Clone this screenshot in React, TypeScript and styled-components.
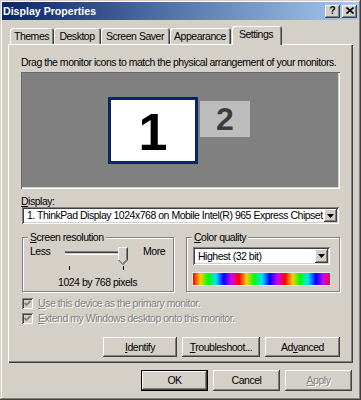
import React from 'react';
import styled, { createGlobalStyle } from 'styled-components';

const GlobalStyle = createGlobalStyle`
  html, body { margin: 0; padding: 0; background: #d4d0c8; }
  * { box-sizing: border-box; }
  u { text-decoration: underline; text-underline-offset: 1px; }
`;

const raised = `
  box-shadow: inset -1px -1px #404040, inset 1px 1px #ffffff, inset -2px -2px #808080, inset 2px 2px #d4d0c8;
`;
const sunken = `
  box-shadow: inset 1px 1px #808080, inset -1px -1px #ffffff, inset 2px 2px #404040, inset -2px -2px #d4d0c8;
`;

const Window = styled.div`
  width: 361px;
  height: 400px;
  background: #d4d0c8;
  padding: 2px;
  display: flex;
  flex-direction: column;
  box-shadow: inset -1px -1px #404040, inset 1px 1px #d4d0c8, inset -2px -2px #808080, inset 2px 2px #ffffff;
  font-family: "Liberation Sans", Arial, sans-serif;
  font-size: 10.5px;
  letter-spacing: -0.48px;
  line-height: 13px;
  color: #000;
`;

const TitleBar = styled.div`
  height: 18px;
  display: flex;
  align-items: center;
  padding: 0 2px 0 1px;
  background: linear-gradient(90deg, #0a246a 0%, #a6caf0 100%);
`;

const Title = styled.span`
  flex: 1;
  color: #fff;
  font-weight: bold;
  font-size: 10.6px;
  letter-spacing: 0;
`;

const TitleButtons = styled.div`
  display: flex;
  gap: 2px;
`;

const TitleButton = styled.div`
  width: 15px;
  height: 13px;
  background: #d4d0c8;
  ${raised}
  display: flex;
  align-items: center;
  justify-content: center;
  font-weight: bold;
  font-size: 10px;
  letter-spacing: 0;
  line-height: 13px;
  padding-bottom: 1px;
`;

const Body = styled.div`
  flex: 1;
  display: flex;
  flex-direction: column;
  padding: 0 6px;
`;

const TabStrip = styled.div`
  margin-top: 6px;
  height: 18px;
  display: flex;
  align-items: flex-end;
  padding-left: 2px;
`;

const Tab = styled.div<{ $w: number; $active?: boolean }>`
  width: ${(p) => p.$w}px;
  height: ${(p) => (p.$active ? 19 : 16)}px;
  margin: ${(p) => (p.$active ? '0 0 -1px 1px' : '0')};
  position: relative;
  z-index: ${(p) => (p.$active ? 1 : 0)};
  background: #d4d0c8;
  border-radius: 3px 3px 0 0;
  box-shadow: inset 1px 1px #ffffff, inset -1px 0 #404040, inset -2px 0 #808080;
  display: flex;
  align-items: center;
  justify-content: center;
  padding: ${(p) => (p.$active ? '0 2px 3px 0' : '0 1px 0 0')};
  white-space: nowrap;
`;

const Panel = styled.div`
  display: flex;
  flex-direction: column;
  padding: 12px 13px 6px 13px;
  background: #d4d0c8;
  box-shadow: inset 1px 1px #ffffff, inset -1px -1px #404040, inset -2px -2px #808080;
`;

const Instruction = styled.div`
  white-space: nowrap;
`;

const Preview = styled.div`
  margin-top: 3px;
  height: 117px;
  position: relative;
  background: #808080;
  box-shadow: inset 1px 1px #6a6a6a, inset -1px -1px #ffffff, inset -2px -2px #d4d0c8;
`;

const Monitor = styled.div<{ $x: number; $y: number; $w: number; $h: number; $primary?: boolean }>`
  position: absolute;
  left: ${(p) => p.$x}px;
  top: ${(p) => p.$y}px;
  width: ${(p) => p.$w}px;
  height: ${(p) => p.$h}px;
  display: flex;
  align-items: center;
  justify-content: center;
  background: ${(p) => (p.$primary ? '#ffffff' : '#bdbdbd')};
  border: ${(p) => (p.$primary ? '3px solid #0a246a' : 'none')};
  font-weight: bold;
  letter-spacing: 0;
  font-size: ${(p) => (p.$primary ? 52 : 32)}px;
  line-height: 1;
  color: ${(p) => (p.$primary ? '#000' : '#3c3c3c')};
  padding-top: ${(p) => (p.$primary ? 2 : 0)}px;
`;

const FieldLabel = styled.div`
  margin-top: 6px;
  line-height: 12px;
  white-space: nowrap;
`;

const Combo = styled.div<{ $h: number }>`
  height: ${(p) => p.$h}px;
  background: #fff;
  display: flex;
  align-items: stretch;
  padding: 2px;
  ${sunken}
`;

const ComboText = styled.span`
  flex: 1;
  padding-left: 3px;
  white-space: nowrap;
  overflow: hidden;
  display: flex;
  align-items: center;
`;

const ComboButton = styled.div`
  width: 13px;
  flex: none;
  background: #d4d0c8;
  ${raised}
  display: flex;
  align-items: center;
  justify-content: center;
`;

const DisplayCombo = styled(Combo)`
  margin: 0 1px;
`;

const GroupRow = styled.div`
  margin: 13px 0 0 1px;
  display: flex;
  gap: 12px;
`;

const Group = styled.div<{ $w: number }>`
  position: relative;
  width: ${(p) => p.$w}px;
  height: 55px;
  border: 1px solid #808080;
  box-shadow: inset 1px 1px #ffffff, 1px 1px #ffffff;
`;

const Legend = styled.span`
  position: absolute;
  top: -7px;
  left: 5px;
  padding: 0 2px;
  background: #d4d0c8;
  white-space: nowrap;
`;

const ResolutionBody = styled.div`
  padding: 7px 0 0 7px;
  display: flex;
  flex-direction: column;
`;

const SliderRow = styled.div`
  display: grid;
  grid-template-columns: 30px 72px auto;
  align-items: start;
`;

const MoreLabel = styled.span`
  margin-left: 11px;
`;

const PixelsText = styled.div`
  margin-top: 4px;
  padding-right: 8px;
  text-align: center;
`;

const ColorBody = styled.div`
  padding: 9px 9px 0 6px;
  display: flex;
  flex-direction: column;
`;

const ColorBar = styled.div`
  margin-top: 8px;
  height: 12px;
  background-image: linear-gradient(90deg, #ff0000 0%, #ffcc00 16%, #00ff00 33%, #00e0ff 50%, #0000ff 67%, #cc00ff 83%, #ff0000 100%);
  background-size: 46px 100%;
  background-repeat: repeat-x;
  box-shadow: 0 0 0 1px #efefef;
`;

const CheckList = styled.div`
  margin-top: 4px;
  display: flex;
  flex-direction: column;
`;

const CheckRow = styled.div`
  height: 15px;
  display: flex;
  align-items: center;
  gap: 5px;
  padding-left: 1px;
  color: #808080;
  text-shadow: 1px 1px 0 #ffffff;
  white-space: nowrap;
`;

const CheckBox = styled.div`
  width: 11px;
  height: 11px;
  flex: none;
  background: #d4d0c8;
  ${sunken}
  display: flex;
  align-items: center;
  justify-content: center;
`;

const ButtonRow = styled.div`
  margin-top: 11px;
  display: flex;
  justify-content: flex-end;
  gap: 5px;
`;

const Button = styled.div<{ $w: number; $h: number; $default?: boolean; $disabled?: boolean }>`
  width: ${(p) => p.$w}px;
  height: ${(p) => p.$h}px;
  background: #d4d0c8;
  display: flex;
  align-items: center;
  justify-content: center;
  white-space: nowrap;
  color: ${(p) => (p.$disabled ? '#808080' : '#000')};
  text-shadow: ${(p) => (p.$disabled ? '1px 1px 0 #ffffff' : 'none')};
  ${(p) =>
    p.$default
      ? 'box-shadow: inset 0 0 0 1px #000, inset -2px -2px #404040, inset 2px 2px #ffffff, inset -3px -3px #808080;'
      : raised}
`;

const Footer = styled.div`
  margin-top: 7px;
  padding-right: 1px;
  display: flex;
  justify-content: flex-end;
  gap: 5px;
`;

const DownArrow = () => (
  <svg width="7" height="4" viewBox="0 0 7 4">
    <polygon points="0,0 7,0 3.5,4" fill="#000" />
  </svg>
);

const Check = () => (
  <svg width="7" height="7" viewBox="0 0 7 7">
    <polyline points="0.5,3 2.5,5 6.5,1" fill="none" stroke="#808080" strokeWidth="1.8" />
  </svg>
);

const Slider = () => (
  <svg width="72" height="27" viewBox="0 0 72 27">
    <rect x="5" y="6" width="63" height="1" fill="#808080" />
    <rect x="5" y="7" width="63" height="1" fill="#404040" />
    <rect x="5" y="8" width="63" height="1" fill="#d4d0c8" />
    <rect x="5" y="9" width="63" height="1" fill="#ffffff" />
    <polygon points="58,2 68,2 68,15 63,20 58,15" fill="#d4d0c8" />
    <polyline points="58.5,15 58.5,2.5 67.5,2.5" fill="none" stroke="#ffffff" strokeWidth="1" />
    <polyline points="67.5,2.5 67.5,15 63,19.5 58.5,15" fill="none" stroke="#404040" strokeWidth="1" />
    <polyline points="66.5,3.5 66.5,14.6 63,18.2" fill="none" stroke="#808080" strokeWidth="1" />
    <rect x="9" y="21" width="1" height="4" fill="#000" />
    <rect x="63" y="21" width="1" height="4" fill="#000" />
  </svg>
);

const CloseGlyph = () => (
  <svg width="8" height="7" viewBox="0 0 8 7">
    <path d="M0.5 0.5 L7.5 6.5 M7.5 0.5 L0.5 6.5" stroke="#000" strokeWidth="1.6" />
  </svg>
);

export default function App() {
  return (
    <>
      <GlobalStyle />
      <Window>
        <TitleBar>
          <Title>Display Properties</Title>
          <TitleButtons>
            <TitleButton>?</TitleButton>
            <TitleButton>
              <CloseGlyph />
            </TitleButton>
          </TitleButtons>
        </TitleBar>
        <Body>
          <TabStrip>
            <Tab $w={44}>Themes</Tab>
            <Tab $w={47}>Desktop</Tab>
            <Tab $w={69}>Screen Saver</Tab>
            <Tab $w={61}>Appearance</Tab>
            <Tab $w={50} $active>
              Settings
            </Tab>
          </TabStrip>
          <Panel>
            <Instruction>Drag the monitor icons to match the physical arrangement of your monitors.</Instruction>
            <Preview>
              <Monitor $x={87} $y={25} $w={90} $h={67} $primary>
                1
              </Monitor>
              <Monitor $x={179} $y={29} $w={50} $h={36}>
                2
              </Monitor>
            </Preview>
            <FieldLabel>
              <u>D</u>isplay:
            </FieldLabel>
            <DisplayCombo $h={17}>
              <ComboText>1. ThinkPad Display 1024x768 on Mobile Intel(R) 965 Express Chipset</ComboText>
              <ComboButton>
                <DownArrow />
              </ComboButton>
            </DisplayCombo>
            <GroupRow>
              <Group $w={152}>
                <Legend>
                  <u>S</u>creen resolution
                </Legend>
                <ResolutionBody>
                  <SliderRow>
                    <span>Less</span>
                    <Slider />
                    <MoreLabel>More</MoreLabel>
                  </SliderRow>
                  <PixelsText>1024 by 768 pixels</PixelsText>
                </ResolutionBody>
              </Group>
              <Group $w={154}>
                <Legend>
                  <u>C</u>olor quality
                </Legend>
                <ColorBody>
                  <Combo $h={18}>
                    <ComboText>Highest (32 bit)</ComboText>
                    <ComboButton>
                      <DownArrow />
                    </ComboButton>
                  </Combo>
                  <ColorBar />
                </ColorBody>
              </Group>
            </GroupRow>
            <CheckList>
              <CheckRow>
                <CheckBox>
                  <Check />
                </CheckBox>
                <span>
                  <u>U</u>se this device as the primary monitor.
                </span>
              </CheckRow>
              <CheckRow>
                <CheckBox>
                  <Check />
                </CheckBox>
                <span>
                  <u>E</u>xtend my Windows desktop onto this monitor.
                </span>
              </CheckRow>
            </CheckList>
            <ButtonRow>
              <Button $w={74} $h={20}>
                <span>
                  <u>I</u>dentify
                </span>
              </Button>
              <Button $w={78} $h={20}>
                <span>
                  <u>T</u>roubleshoot...
                </span>
              </Button>
              <Button $w={75} $h={20}>
                <span>
                  Ad<u>v</u>anced
                </span>
              </Button>
            </ButtonRow>
          </Panel>
          <Footer>
            <Button $w={67} $h={21} $default>
              OK
            </Button>
            <Button $w={67} $h={21}>
              Cancel
            </Button>
            <Button $w={67} $h={21} $disabled>
              <span>
                <u>A</u>pply
              </span>
            </Button>
          </Footer>
        </Body>
      </Window>
    </>
  );
}
